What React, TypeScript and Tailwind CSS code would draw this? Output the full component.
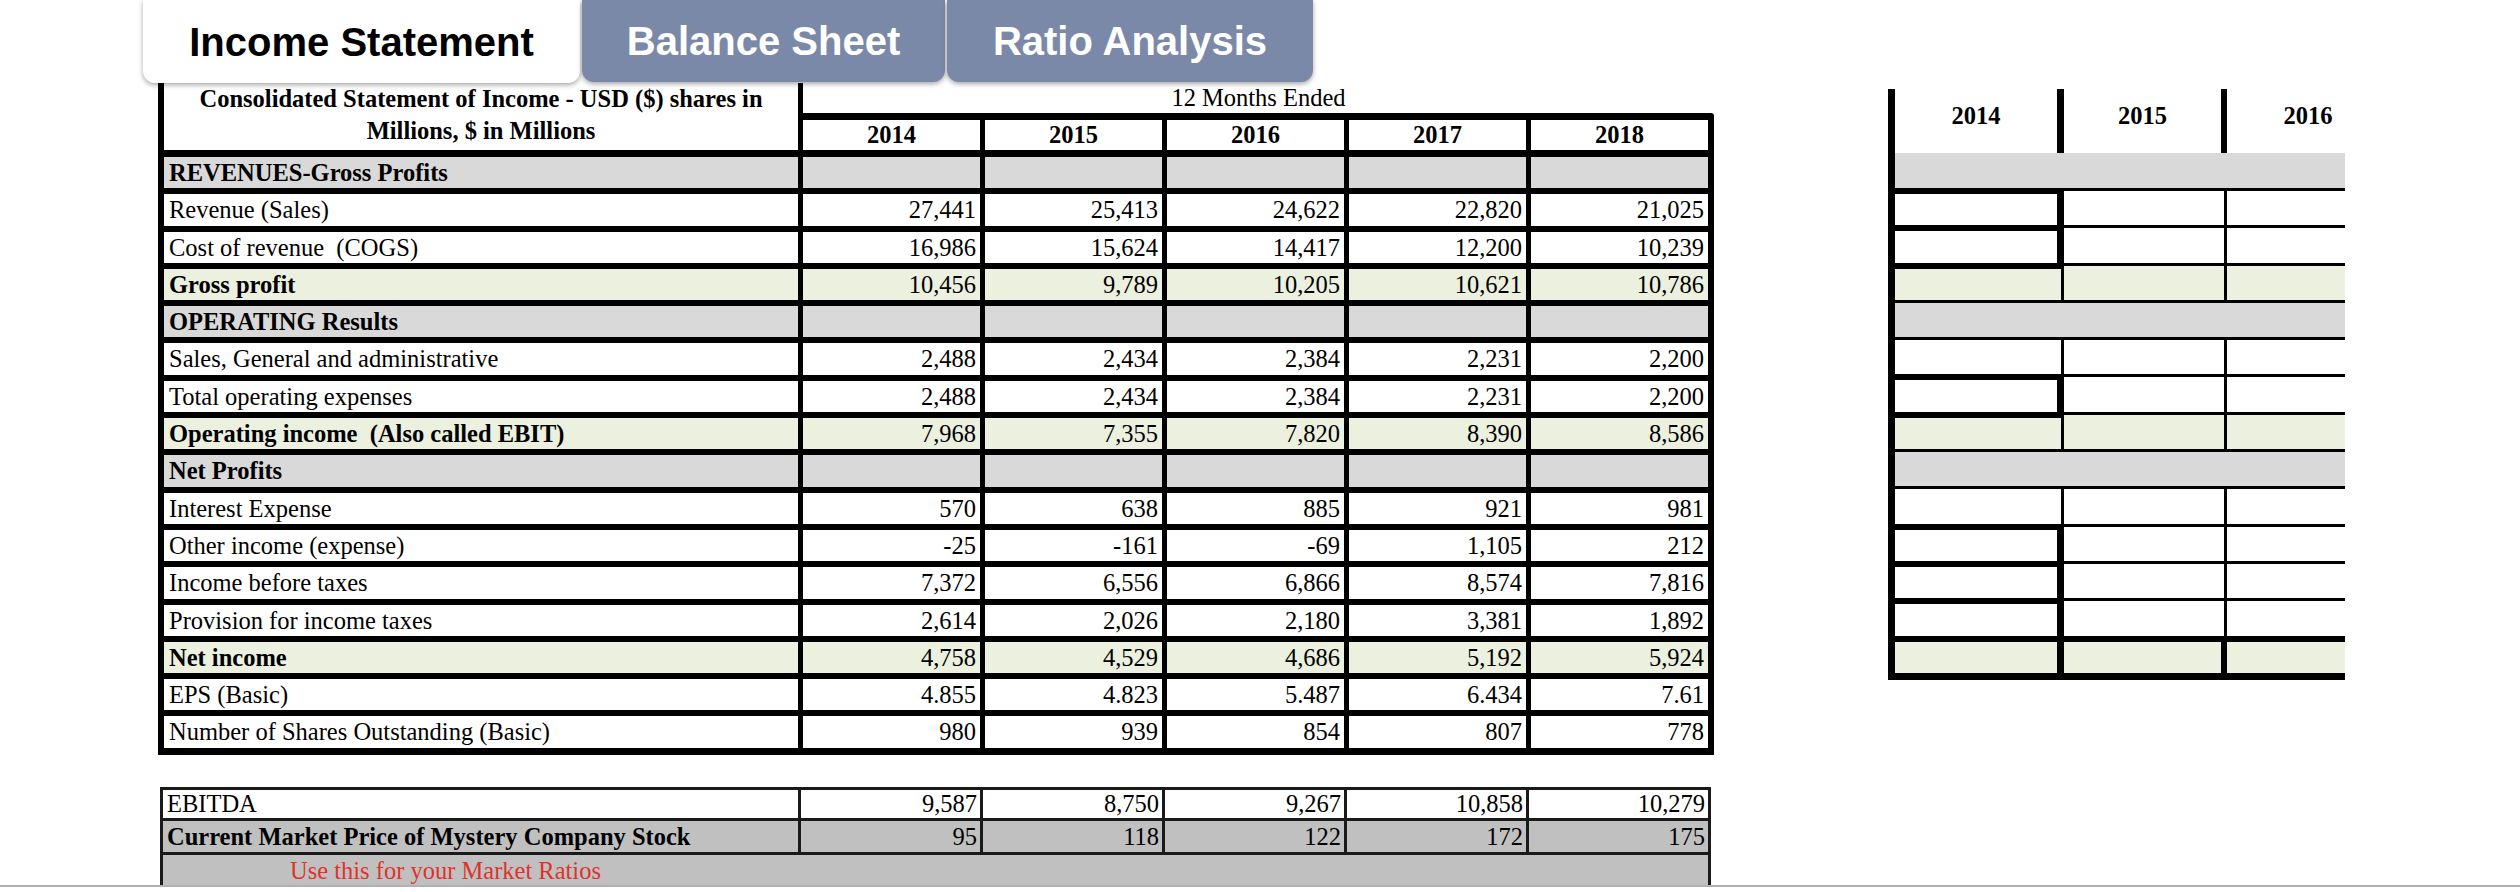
import React from "react";

type Row = {
  label: string;
  bold?: boolean;
  kind: "gray" | "white" | "green";
  vals?: string[];
};

const rows: Row[] = [
  { label: "REVENUES-Gross Profits", bold: true, kind: "gray" },
  { label: "Revenue (Sales)", kind: "white", vals: ["27,441", "25,413", "24,622", "22,820", "21,025"] },
  { label: "Cost of revenue  (COGS)", kind: "white", vals: ["16,986", "15,624", "14,417", "12,200", "10,239"] },
  { label: "Gross profit", bold: true, kind: "green", vals: ["10,456", "9,789", "10,205", "10,621", "10,786"] },
  { label: "OPERATING Results", bold: true, kind: "gray" },
  { label: "Sales, General and administrative", kind: "white", vals: ["2,488", "2,434", "2,384", "2,231", "2,200"] },
  { label: "Total operating expenses", kind: "white", vals: ["2,488", "2,434", "2,384", "2,231", "2,200"] },
  { label: "Operating income  (Also called EBIT)", bold: true, kind: "green", vals: ["7,968", "7,355", "7,820", "8,390", "8,586"] },
  { label: "Net Profits", bold: true, kind: "gray" },
  { label: "Interest Expense", kind: "white", vals: ["570", "638", "885", "921", "981"] },
  { label: "Other income (expense)", kind: "white", vals: ["-25", "-161", "-69", "1,105", "212"] },
  { label: "Income before taxes", kind: "white", vals: ["7,372", "6,556", "6,866", "8,574", "7,816"] },
  { label: "Provision for income taxes", kind: "white", vals: ["2,614", "2,026", "2,180", "3,381", "1,892"] },
  { label: "Net income", bold: true, kind: "green", vals: ["4,758", "4,529", "4,686", "5,192", "5,924"] },
  { label: "EPS (Basic)", kind: "white", vals: ["4.855", "4.823", "5.487", "6.434", "7.61"] },
  { label: "Number of Shares Outstanding (Basic)", kind: "white", vals: ["980", "939", "854", "807", "778"] },
];

const years = ["2014", "2015", "2016", "2017", "2018"];

const bgFor = (k: Row["kind"]) =>
  k === "gray" ? "bg-[#d9d9d9]" : k === "green" ? "bg-[#ebf0df]" : "bg-white";

// right-side answer grid: 14 rows matching main rows 0..13
const rightKinds: { kind: Row["kind"]; box: boolean }[] = [
  { kind: "gray", box: false },
  { kind: "white", box: true },
  { kind: "white", box: true },
  { kind: "green", box: false },
  { kind: "gray", box: false },
  { kind: "white", box: false },
  { kind: "white", box: true },
  { kind: "green", box: false },
  { kind: "gray", box: false },
  { kind: "white", box: false },
  { kind: "white", box: true },
  { kind: "white", box: true },
  { kind: "white", box: true },
  { kind: "green", box: false },
];

function RightTable() {
  return (
    <div className="ml-[174px] mt-[6px] w-[457px] overflow-hidden">
      <div className="w-[560px] border-l-[7px] border-b-[7px] border-black">
        {/* header */}
        <div className="flex h-[64px] bg-white">
          <div className="w-[169px] border-r-[7px] border-black text-center pt-[12px] leading-[30px] font-bold">2014</div>
          <div className="w-[163px] border-r-[6px] border-black text-center pt-[12px] leading-[30px] font-bold">2015</div>
          <div className="w-[162px] text-center pt-[12px] leading-[30px] font-bold">2016</div>
        </div>
        {rightKinds.map((r, i) => {
          const bg = bgFor(r.kind);
          if (r.kind === "gray") {
            return (
              <div
                key={i}
                className={
                  i === 0
                    ? "h-[35px] bg-[#d9d9d9]"
                    : "h-[37.3px] bg-[#d9d9d9] border-t-[3px] border-black"
                }
              />
            );
          }
          const last = i === 13;
          const prevBox = i > 0 && rightKinds[i - 1].box;
          const c1Top = last || r.box || prevBox ? "border-t-[6px]" : "border-t-[3px]";
          const c1Right = last || r.box ? "border-r-[7px]" : "border-r-[3px]";
          const otherTop = last ? "border-t-[6px]" : "border-t-[3px]";
          const c2Right = last ? "border-r-[6px]" : "border-r-[3px]";
          return (
            <div key={i} className="flex h-[37.3px]">
              <div className={`w-[169px] ${c1Top} ${c1Right} border-black ${bg}`} />
              <div className={`w-[163px] ${otherTop} ${c2Right} border-black ${bg}`} />
              <div className={`flex-1 ${otherTop} border-black ${bg}`} />
            </div>
          );
        })}
      </div>
    </div>
  );
}

function MainTable() {
  return (
    <div className="flex flex-col w-[1556px] ml-[158px]">
      {/* header */}
      <div className="flex h-[67px]">
        <div className="w-[645px] border-l-[6px] border-r-[5px] border-black bg-white text-center font-bold leading-[32px]">
          Consolidated Statement of Income - USD ($) shares in
          <br />
          Millions, $ in Millions
        </div>
        <div className="flex-1 flex flex-col">
          <div className="h-[30px] leading-[30px] text-center">12 Months Ended</div>
          <div className="flex-1 bg-black pt-[7px] pr-[6px] flex gap-[5px] rounded-tr-[3px]">
            {years.map((y) => (
              <div key={y} className="w-[177px] bg-white text-center font-bold leading-[30px]">
                {y}
              </div>
            ))}
          </div>
        </div>
      </div>
      {/* body */}
      <div className="bg-black pl-[6px] pr-[6px] pt-[7px] pb-[7px] grid grid-cols-[634px_repeat(5,177px)] gap-x-[5px] gap-y-[6px]">
        {rows.map((r, i) => (
          <React.Fragment key={i}>
            <div
              className={`h-[31.3px] leading-[31px] pl-[5px] whitespace-pre ${bgFor(r.kind)} ${
                r.bold ? "font-bold" : ""
              }`}
            >
              {r.label}
            </div>
            {years.map((y, j) => (
              <div
                key={y}
                className={`h-[31.3px] leading-[31px] pr-[4px] text-right ${bgFor(r.kind)}`}
              >
                {r.vals ? r.vals[j] : ""}
              </div>
            ))}
          </React.Fragment>
        ))}
      </div>
    </div>
  );
}

function BottomTable() {
  const ebitda = ["9,587", "8,750", "9,267", "10,858", "10,279"];
  const price = ["95", "118", "122", "172", "175"];
  return (
    <div className="ml-[160px] mt-[32px] w-[1551px] bg-[#1a1a1a] p-[3px] grid grid-cols-[635px_repeat(5,179px)] gap-[3px]">
      <div className="h-[28px] leading-[28px] bg-white pl-[4px]">EBITDA</div>
      {ebitda.map((v, i) => (
        <div key={i} className="h-[28px] leading-[28px] bg-white text-right pr-[3px]">
          {v}
        </div>
      ))}
      <div className="h-[31px] leading-[31px] bg-[#c0c0c0] pl-[4px] font-bold">
        Current Market Price of Mystery Company Stock
      </div>
      {price.map((v, i) => (
        <div key={i} className="h-[31px] leading-[31px] bg-[#c0c0c0] text-right pr-[3px]">
          {v}
        </div>
      ))}
      <div className="col-span-6 h-[30px] leading-[31px] bg-[#c0c0c0] pl-[127px] text-[#e0322c]">
        Use this for your Market Ratios
      </div>
    </div>
  );
}

export default function App() {
  return (
    <div className="w-[2520px] h-[892px] bg-white overflow-hidden">
      <div
        className="h-[885px] overflow-hidden text-[24.5px] text-black"
        style={{ fontFamily: '"Liberation Serif", "Times New Roman", serif' }}
      >
        {/* tabs */}
        <div
          className="relative z-10 flex h-[83px] pl-[143px] gap-[2px]"
          style={{ fontFamily: '"Liberation Sans", Arial, sans-serif' }}
        >
          <div className="w-[437px] h-[83px] bg-white rounded-b-[12px] shadow-[0_2px_5px_rgba(0,0,0,0.35)] flex items-center justify-center text-[40px] font-bold text-black">
            Income Statement
          </div>
          <div className="w-[363px] h-[82px] bg-[#7b89a9] rounded-b-[12px] shadow-[0_2px_5px_rgba(0,0,0,0.35)] flex items-center justify-center text-[40px] font-bold text-white">
            Balance Sheet
          </div>
          <div className="w-[366px] h-[82px] bg-[#7b89a9] rounded-b-[12px] shadow-[0_2px_5px_rgba(0,0,0,0.35)] flex items-center justify-center text-[40px] font-bold text-white">
            Ratio Analysis
          </div>
        </div>
        <div className="flex items-start">
          <MainTable />
          <RightTable />
        </div>
        <BottomTable />
      </div>
      <div className="h-[2px] bg-[#b0b0b0]" />
    </div>
  );
}
